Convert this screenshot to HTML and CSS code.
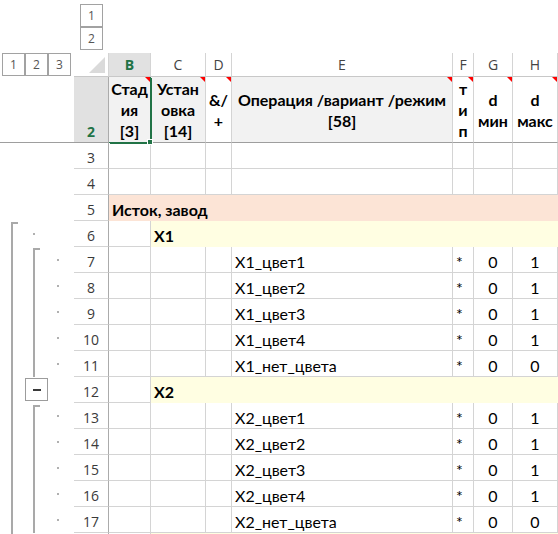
FILE: index.html
```html
<!DOCTYPE html>
<html lang="ru">
<head>
<meta charset="utf-8">
<title>Sheet</title>
<link rel="stylesheet" href="styles.css">
</head>
<body>
<div class="app">
  <div class="colgroup-bar">
    <div class="lvl-stack">
      <div class="lvl">1</div>
      <div class="lvl">2</div>
    </div>
  </div>

  <div class="sheet">
    <!-- column header row -->
    <div class="ol-hdr"><div class="lvl">1</div><div class="lvl">2</div><div class="lvl">3</div></div>
    <div class="corner"><span class="tri"></span></div>
    <div class="ch sel">B</div>
    <div class="ch">C</div>
    <div class="ch">D</div>
    <div class="ch">E</div>
    <div class="ch">F</div>
    <div class="ch">G</div>
    <div class="ch">H</div>

    <!-- row 2 -->
    <div class="ol frz"></div>
    <div class="rh rh-sel frz">2</div>
    <div class="c h2 gray active">Стад<br>ия<br>[3]<i class="note"></i><i class="handle"></i></div>
    <div class="c h2 gray">Устан<br>овка<br>[14]<i class="note"></i></div>
    <div class="c h2">&amp;/<br>+<i class="note"></i></div>
    <div class="c h2 gray">Операция /вариант /режим<br>[58]<i class="note"></i></div>
    <div class="c h2">т<br>и<br>п<i class="note"></i></div>
    <div class="c h2">d<br>мин<i class="note"></i></div>
    <div class="c h2">d<br>макс<i class="note"></i></div>

    <!-- row 3 -->
    <div class="ol"></div>
    <div class="rh">3</div>
    <div class="c"></div><div class="c"></div><div class="c"></div><div class="c"></div><div class="c"></div><div class="c"></div><div class="c"></div>

    <!-- row 4 -->
    <div class="ol"></div>
    <div class="rh">4</div>
    <div class="c"></div><div class="c"></div><div class="c"></div><div class="c"></div><div class="c"></div><div class="c"></div><div class="c"></div>

    <!-- row 5 -->
    <div class="ol"></div>
    <div class="rh">5</div>
    <div class="c peach span7 b">Исток, завод</div>

    <!-- row 6 -->
    <div class="ol"><span class="ln ln1"><span class="vtop"></span></span><span class="ln ln2 mid"><span class="dot"></span></span><span class="ln ln3"></span></div>
    <div class="rh">6</div>
    <div class="c"></div>
    <div class="c yel span6 b">X1</div>

    <!-- row 7 -->
    <div class="ol"><span class="ln ln1"><span class="vline"></span></span><span class="ln ln2"><span class="vtop"></span></span><span class="ln ln3 mid"><span class="dot"></span></span></div>
    <div class="rh">7</div>
    <div class="c"></div><div class="c"></div><div class="c"></div>
    <div class="c">X1_цвет1</div><div class="c">*</div><div class="c num">0</div><div class="c num">1</div>

    <!-- row 8 -->
    <div class="ol"><span class="ln ln1"><span class="vline"></span></span><span class="ln ln2"><span class="vline"></span></span><span class="ln ln3 mid"><span class="dot"></span></span></div>
    <div class="rh">8</div>
    <div class="c"></div><div class="c"></div><div class="c"></div>
    <div class="c">X1_цвет2</div><div class="c">*</div><div class="c num">0</div><div class="c num">1</div>

    <!-- row 9 -->
    <div class="ol"><span class="ln ln1"><span class="vline"></span></span><span class="ln ln2"><span class="vline"></span></span><span class="ln ln3 mid"><span class="dot"></span></span></div>
    <div class="rh">9</div>
    <div class="c"></div><div class="c"></div><div class="c"></div>
    <div class="c">X1_цвет3</div><div class="c">*</div><div class="c num">0</div><div class="c num">1</div>

    <!-- row 10 -->
    <div class="ol"><span class="ln ln1"><span class="vline"></span></span><span class="ln ln2"><span class="vline"></span></span><span class="ln ln3 mid"><span class="dot"></span></span></div>
    <div class="rh">10</div>
    <div class="c"></div><div class="c"></div><div class="c"></div>
    <div class="c">X1_цвет4</div><div class="c">*</div><div class="c num">0</div><div class="c num">1</div>

    <!-- row 11 -->
    <div class="ol"><span class="ln ln1"><span class="vline"></span></span><span class="ln ln2"><span class="vline"></span></span><span class="ln ln3 mid"><span class="dot"></span></span></div>
    <div class="rh">11</div>
    <div class="c"></div><div class="c"></div><div class="c"></div>
    <div class="c">X1_нет_цвета</div><div class="c">*</div><div class="c num">0</div><div class="c num">0</div>

    <!-- row 12 -->
    <div class="ol"><span class="ln ln1"><span class="vline"></span></span><span class="ln ln2"><span class="obtn"><span class="minus"></span></span></span><span class="ln ln3"></span></div>
    <div class="rh">12</div>
    <div class="c"></div>
    <div class="c yel span6 b">X2</div>

    <!-- row 13 -->
    <div class="ol"><span class="ln ln1"><span class="vline"></span></span><span class="ln ln2"><span class="vtop low"></span></span><span class="ln ln3 mid"><span class="dot"></span></span></div>
    <div class="rh">13</div>
    <div class="c"></div><div class="c"></div><div class="c"></div>
    <div class="c">X2_цвет1</div><div class="c">*</div><div class="c num">0</div><div class="c num">1</div>

    <!-- row 14 -->
    <div class="ol"><span class="ln ln1"><span class="vline"></span></span><span class="ln ln2"><span class="vline"></span></span><span class="ln ln3 mid"><span class="dot"></span></span></div>
    <div class="rh">14</div>
    <div class="c"></div><div class="c"></div><div class="c"></div>
    <div class="c">X2_цвет2</div><div class="c">*</div><div class="c num">0</div><div class="c num">1</div>

    <!-- row 15 -->
    <div class="ol"><span class="ln ln1"><span class="vline"></span></span><span class="ln ln2"><span class="vline"></span></span><span class="ln ln3 mid"><span class="dot"></span></span></div>
    <div class="rh">15</div>
    <div class="c"></div><div class="c"></div><div class="c"></div>
    <div class="c">X2_цвет3</div><div class="c">*</div><div class="c num">0</div><div class="c num">1</div>

    <!-- row 16 -->
    <div class="ol"><span class="ln ln1"><span class="vline"></span></span><span class="ln ln2"><span class="vline"></span></span><span class="ln ln3 mid"><span class="dot"></span></span></div>
    <div class="rh">16</div>
    <div class="c"></div><div class="c"></div><div class="c"></div>
    <div class="c">X2_цвет4</div><div class="c">*</div><div class="c num">0</div><div class="c num">1</div>

    <!-- row 17 -->
    <div class="ol"><span class="ln ln1"><span class="vline"></span></span><span class="ln ln2"><span class="vline"></span></span><span class="ln ln3 mid"><span class="dot"></span></span></div>
    <div class="rh">17</div>
    <div class="c"></div><div class="c"></div><div class="c"></div>
    <div class="c">X2_нет_цвета</div><div class="c">*</div><div class="c num">0</div><div class="c num">0</div>

    <!-- row 18 (only its top edge is visible) -->
    <div class="ol"><span class="ln ln1"><span class="vline"></span></span><span class="ln ln2"></span><span class="ln ln3"></span></div>
    <div class="rh"></div>
    <div class="c"></div>
    <div class="c yel span6"></div>
  </div>
</div>
</body>
</html>
```

FILE: styles.css
```css
* {
  box-sizing: border-box;
  margin: 0;
  padding: 0;
}

html, body {
  width: 558px;
  height: 534px;
  overflow: hidden;
  background: #ffffff;
}

body {
  font-family: "Lato", "Liberation Sans", sans-serif;
  color: #000000;
}

.app {
  width: 558px;
}

/* column outline buttons above the sheet */
.colgroup-bar {
  height: 53px;
  display: flex;
  padding: 4px 0 0 80px;
}

.lvl-stack {
  display: flex;
  flex-direction: column;
}

.lvl {
  width: 23px;
  height: 23px;
  border: 1px solid #a2a2a2;
  background: #ffffff;
  display: flex;
  align-items: center;
  justify-content: center;
  font: 12px/14px "Open Sans", "Liberation Sans", sans-serif;
  color: #555555;
}

/* sheet grid */
.sheet {
  display: grid;
  grid-template-columns: 74px 35px 42px 55px 26px 221px 21px 39px 45px;
  grid-template-rows: 24px 66px repeat(16, 26px);
}

.ol-hdr {
  display: flex;
  padding-left: 2px;
}

.corner {
  display: flex;
  align-items: flex-end;
  justify-content: flex-end;
  padding: 0 3px 3px 0;
  border-right: 1px solid #d4d4d4;
  border-bottom: 1px solid #c8c8c8;
}

.tri {
  width: 0;
  height: 0;
  border-left: 16px solid transparent;
  border-bottom: 16px solid #dadada;
}

.ch {
  display: flex;
  align-items: center;
  justify-content: center;
  border-right: 1px solid #d4d4d4;
  border-bottom: 1px solid #c8c8c8;
  font: 14px/20px "Open Sans", "Liberation Sans", sans-serif;
  color: #444444;
}

.ch.sel {
  background: #e1e1e1;
  color: #217346;
  font-weight: 700;
}

/* outline gutter */
.ol {
  display: flex;
}

.ol.frz {
  border-bottom: 1px solid #9e9e9e;
}

.ln {
  display: flex;
}

.ln1 { width: 22px; }
.ln2 { width: 26px; }
.ln3 { width: 26px; }

.ln.mid {
  align-items: center;
}

.vline {
  margin-left: 11px;
  width: 2px;
  background: #a9a9a9;
}

.vtop {
  margin-left: 11px;
  margin-top: 1px;
  width: 7px;
  border-left: 2px solid #a9a9a9;
  border-top: 2px solid #a9a9a9;
}

.vtop.low {
  margin-top: 2px;
}

.ln2 .dot {
  margin-left: 11px;
}

.ln3 .dot {
  margin-left: 9px;
}

.dot {
  width: 2px;
  height: 2px;
  background: #b0b0b0;
}

.obtn {
  margin: 1px 0 0 3px;
  width: 23px;
  height: 23px;
  border: 1px solid #9c9c9c;
  background: #ffffff;
  display: flex;
  align-items: center;
  justify-content: center;
}

.minus {
  width: 8px;
  height: 2px;
  background: #3a3a3a;
}

/* row headers */
.rh {
  display: flex;
  align-items: flex-end;
  justify-content: center;
  border-right: 1px solid #ababab;
  border-bottom: 1px solid #d4d4d4;
  font: 14px/20px "Open Sans", "Liberation Sans", sans-serif;
  color: #3a3a3a;
}

.rh.rh-sel {
  background: #e1e1e1;
  color: #217346;
  font-weight: 700;
}

.rh.frz {
  border-bottom-color: #9e9e9e;
}

/* cells */
.c {
  display: flex;
  align-items: flex-end;
  padding: 0 3px;
  border-right: 1px solid #d4d4d4;
  border-bottom: 1px solid #d4d4d4;
  font-size: 16px;
  line-height: 20px;
  white-space: nowrap;
}

.c.num {
  justify-content: center;
}

.c.b {
  font-weight: 700;
}

.c.h2 {
  position: relative;
  padding: 0;
  align-items: center;
  justify-content: center;
  text-align: center;
  font-weight: 700;
  line-height: 21px;
  border-bottom-color: #9e9e9e;
}

.c.gray {
  background: #f2f2f2;
}

.c.active {
  border-right-color: #217346;
  border-bottom-color: #217346;
  box-shadow: 1px 1px 0 #217346;
  z-index: 2;
}

.note {
  position: absolute;
  top: 0;
  right: 0;
  width: 0;
  height: 0;
  border-top: 5px solid #ff0000;
  border-left: 5px solid transparent;
}

.handle {
  position: absolute;
  right: -3px;
  bottom: -3px;
  width: 6px;
  height: 6px;
  background: #217346;
  border: 1px solid #ffffff;
}

.span7 { grid-column: span 7; }
.span6 { grid-column: span 6; }

.c.peach {
  background: #fce4d6;
  border-right-color: #fce4d6;
  border-bottom-color: #fce4d6;
}

.c.yel {
  background: #fffee2;
  border-right-color: #fffee2;
  border-bottom-color: #fffee2;
}
```
